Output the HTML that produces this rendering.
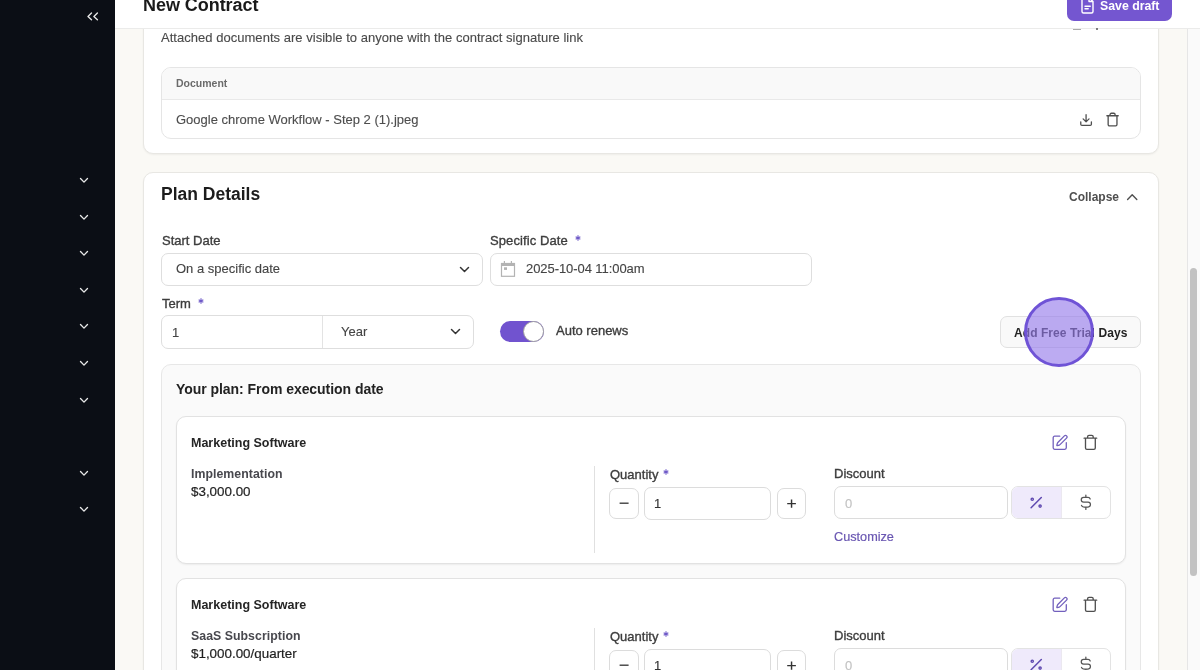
<!DOCTYPE html>
<html><head><meta charset="utf-8"><style>
html,body{margin:0;padding:0;width:1200px;height:670px;overflow:hidden;background:#faf9f5;}
body{position:relative;font-family:"Liberation Sans",sans-serif;}
.t{position:absolute;white-space:nowrap;line-height:1;-webkit-font-smoothing:antialiased;will-change:transform;}
.b{position:absolute;}
</style></head><body>
<div class="b" style="left:0px;top:0px;width:115px;height:670px;background:#0b0e15;"></div>
<svg class="b" style="left:85px;top:10px" width="16" height="14" viewBox="0 0 16 14"><path d="M6.5 2.95 L3.0 6.4 L6.5 9.85 M12.4 2.95 L8.9 6.4 L12.4 9.85" fill="none" stroke="#e6e6e6" stroke-width="1.4" stroke-linecap="round" stroke-linejoin="round"/></svg>
<svg class="b" style="left:77px;top:175.90px" width="13" height="9" viewBox="0 0 13 9"><path d="M3.5 2.5 L7.0 6.1 L10.5 2.5" fill="none" stroke="#e9e9e9" stroke-width="1.35" stroke-linecap="round" stroke-linejoin="round"/></svg>
<svg class="b" style="left:77px;top:212.50px" width="13" height="9" viewBox="0 0 13 9"><path d="M3.5 2.5 L7.0 6.1 L10.5 2.5" fill="none" stroke="#e9e9e9" stroke-width="1.35" stroke-linecap="round" stroke-linejoin="round"/></svg>
<svg class="b" style="left:77px;top:249.10px" width="13" height="9" viewBox="0 0 13 9"><path d="M3.5 2.5 L7.0 6.1 L10.5 2.5" fill="none" stroke="#e9e9e9" stroke-width="1.35" stroke-linecap="round" stroke-linejoin="round"/></svg>
<svg class="b" style="left:77px;top:285.70px" width="13" height="9" viewBox="0 0 13 9"><path d="M3.5 2.5 L7.0 6.1 L10.5 2.5" fill="none" stroke="#e9e9e9" stroke-width="1.35" stroke-linecap="round" stroke-linejoin="round"/></svg>
<svg class="b" style="left:77px;top:322.30px" width="13" height="9" viewBox="0 0 13 9"><path d="M3.5 2.5 L7.0 6.1 L10.5 2.5" fill="none" stroke="#e9e9e9" stroke-width="1.35" stroke-linecap="round" stroke-linejoin="round"/></svg>
<svg class="b" style="left:77px;top:358.90px" width="13" height="9" viewBox="0 0 13 9"><path d="M3.5 2.5 L7.0 6.1 L10.5 2.5" fill="none" stroke="#e9e9e9" stroke-width="1.35" stroke-linecap="round" stroke-linejoin="round"/></svg>
<svg class="b" style="left:77px;top:395.50px" width="13" height="9" viewBox="0 0 13 9"><path d="M3.5 2.5 L7.0 6.1 L10.5 2.5" fill="none" stroke="#e9e9e9" stroke-width="1.35" stroke-linecap="round" stroke-linejoin="round"/></svg>
<svg class="b" style="left:77px;top:468.70px" width="13" height="9" viewBox="0 0 13 9"><path d="M3.5 2.5 L7.0 6.1 L10.5 2.5" fill="none" stroke="#e9e9e9" stroke-width="1.35" stroke-linecap="round" stroke-linejoin="round"/></svg>
<svg class="b" style="left:77px;top:505.30px" width="13" height="9" viewBox="0 0 13 9"><path d="M3.5 2.5 L7.0 6.1 L10.5 2.5" fill="none" stroke="#e9e9e9" stroke-width="1.35" stroke-linecap="round" stroke-linejoin="round"/></svg>
<div class="b" style="left:115px;top:0px;width:1085px;height:670px;background:#faf9f5;"></div>
<div class="b" style="left:143px;top:-20px;width:1016px;height:174px;background:#fff;border:1px solid #e8e7e3;border-radius:10px;box-sizing:border-box;box-shadow:0 1px 2px rgba(0,0,0,0.05);"></div>
<div class="t" style="left:160.90px;top:30.50px;font-size:13px;font-weight:normal;color:#4a4a4a;letter-spacing:0.03px;-webkit-text-stroke:0.12px #4a4a4a;">Attached documents are visible to anyone with the contract signature link</div>
<div class="b" style="left:161px;top:67px;width:980px;height:72px;background:#fff;border:1px solid #e5e5e5;border-radius:10px;box-sizing:border-box;overflow:hidden;"></div>
<div class="b" style="left:162px;top:68px;width:978px;height:32px;background:#f9f9f9;border-radius:9px 9px 0 0;"></div>
<div class="b" style="left:162px;top:99px;width:978px;height:1px;background:#e9e9e9;"></div>
<div class="t" style="left:175.90px;top:78.31px;font-size:10.5px;font-weight:bold;color:#6b6b6b;">Document</div>
<div class="t" style="left:175.90px;top:112.50px;font-size:13px;font-weight:normal;color:#4d4d4d;-webkit-text-stroke:0.12px #4d4d4d;">Google chrome Workflow - Step 2 (1).jpeg</div>
<svg class="b" style="left:1078.80px;top:112.80px;" width="14.16" height="14.16" viewBox="0 0 24 24"><path d="M21 15v4a2 2 0 0 1-2 2H5a2 2 0 0 1-2-2v-4 M7 10l5 5 5-5 M12 15V3" fill="none" stroke="#4f4f4f" stroke-width="2.2" stroke-linecap="round" stroke-linejoin="round"/></svg>
<svg class="b" style="left:1105.44px;top:111.57px;" width="15.12" height="15.12" viewBox="0 0 24 24"><path d="M3 6h18 M19 6v14c0 1-1 2-2 2H7c-1 0-2-1-2-2V6 M8 6V4c0-1 1-2 2-2h4c1 0 2 1 2 2v2" fill="none" stroke="#4f4f4f" stroke-width="2.1" stroke-linecap="round" stroke-linejoin="round"/></svg>
<div class="b" style="left:115px;top:0px;width:1085px;height:28px;background:#fff;"></div>
<div class="b" style="left:115px;top:28px;width:1085px;height:1px;background:#ebebea;"></div>
<div class="t" style="left:142.60px;top:-3.74px;font-size:18px;font-weight:bold;color:#1a1a1a;letter-spacing:-0.05px;">New Contract</div>
<div class="b" style="left:1067px;top:-10px;width:105px;height:31px;background:#7456d0;border-radius:7px;"></div>
<svg class="b" style="left:1079px;top:-4.5px" width="17" height="19" viewBox="0 0 17 19"><path d="M3 3 Q3 1.5 4.5 1.5 H10 L14 5.5 V15.5 Q14 17 12.5 17 H4.5 Q3 17 3 15.5 Z M10 1.5 V5.5 H14 M6 10.2 H11.2 M6 12.7 H9.2" fill="none" stroke="#fff" stroke-width="1.4" stroke-linecap="round" stroke-linejoin="round"/></svg>
<div class="t" style="left:1100.00px;top:-0.31px;font-size:12.3px;font-weight:bold;color:#ffffff;">Save draft</div>
<div class="b" style="left:143px;top:171.6px;width:1016px;height:528.4px;background:#fff;border:1px solid #e8e7e3;border-radius:10px;box-sizing:border-box;box-shadow:0 1px 2px rgba(0,0,0,0.05);"></div>
<div class="t" style="left:161.00px;top:186.39px;font-size:17.5px;font-weight:bold;color:#1c1c1c;">Plan Details</div>
<div class="t" style="left:1068.50px;top:191.24px;font-size:12px;font-weight:bold;color:#4f4f4f;">Collapse</div>
<svg class="b" style="left:1125px;top:191px" width="14" height="11" viewBox="0 0 14 11"><path d="M2.6 8.4 L7.2 3.7 L11.8 8.4" fill="none" stroke="#4f4f4f" stroke-width="1.4" stroke-linecap="round" stroke-linejoin="round"/></svg>
<div class="t" style="left:161.50px;top:233.75px;font-size:13px;font-weight:normal;color:#3d3d3d;-webkit-text-stroke:0.35px #3d3d3d;">Start Date</div>
<div class="t" style="left:490.00px;top:233.75px;font-size:13px;font-weight:normal;color:#3d3d3d;letter-spacing:0.1px;-webkit-text-stroke:0.35px #3d3d3d;">Specific Date</div>
<svg class="b" style="left:573.35px;top:233.20px" width="10" height="10" viewBox="573.35 233.20 10 10"><path d="M578.35 235.50 L578.35 240.90 M576.01 236.85 L580.69 239.55 M580.69 236.85 L576.01 239.55 " stroke="#6f5ac8" stroke-width="1.1" stroke-linecap="butt"/></svg>
<div class="b" style="left:161px;top:253px;width:322px;height:33px;border:1px solid #dedede;border-radius:7px;box-sizing:border-box;background:#fff;"></div>
<div class="t" style="left:176.00px;top:262.40px;font-size:13px;font-weight:normal;color:#444;-webkit-text-stroke:0.12px #444;">On a specific date</div>
<svg class="b" style="left:459px;top:265.5px" width="11" height="7" viewBox="0 0 11 7"><path d="M1.5 1.5 L5.5 5.5 L9.5 1.5" fill="none" stroke="#333" stroke-width="1.5" stroke-linecap="round" stroke-linejoin="round"/></svg>
<div class="b" style="left:490px;top:253px;width:322px;height:33px;border:1px solid #dedede;border-radius:7px;box-sizing:border-box;background:#fff;"></div>
<svg class="b" style="left:500px;top:260px" width="16" height="17" viewBox="0 0 16 17"><rect x="1.5" y="3.5" width="13" height="12.8" fill="none" stroke="#b3b3b3" stroke-width="1.2"/><rect x="1.2" y="3" width="13.6" height="3" fill="#b3b3b3"/><path d="M4.4 1 V3.5 M11.4 1 V3.5" stroke="#b3b3b3" stroke-width="1.2"/><rect x="4" y="7.3" width="3" height="2.6" fill="#b3b3b3"/></svg>
<div class="t" style="left:526.00px;top:262.40px;font-size:13px;font-weight:normal;color:#444;letter-spacing:-0.07px;-webkit-text-stroke:0.12px #444;">2025-10-04 11:00am</div>
<div class="t" style="left:162.00px;top:296.50px;font-size:13px;font-weight:normal;color:#3d3d3d;-webkit-text-stroke:0.35px #3d3d3d;">Term</div>
<svg class="b" style="left:196.30px;top:295.80px" width="10" height="10" viewBox="196.30 295.80 10 10"><path d="M201.30 298.10 L201.30 303.50 M198.96 299.45 L203.64 302.15 M203.64 299.45 L198.96 302.15 " stroke="#6f5ac8" stroke-width="1.1" stroke-linecap="butt"/></svg>
<div class="b" style="left:161px;top:315px;width:313px;height:34px;border:1px solid #dedede;border-radius:7px;box-sizing:border-box;background:#fff;"></div>
<div class="b" style="left:322px;top:316px;width:1px;height:32px;background:#e3e3e3;"></div>
<div class="t" style="left:172.00px;top:325.70px;font-size:13px;font-weight:normal;color:#444;-webkit-text-stroke:0.12px #444;">1</div>
<div class="t" style="left:340.80px;top:324.90px;font-size:13px;font-weight:normal;color:#444;-webkit-text-stroke:0.12px #444;">Year</div>
<svg class="b" style="left:450px;top:328px" width="11" height="7" viewBox="0 0 11 7"><path d="M1.5 1.5 L5.5 5.5 L9.5 1.5" fill="none" stroke="#333" stroke-width="1.5" stroke-linecap="round" stroke-linejoin="round"/></svg>
<div class="b" style="left:500px;top:321.3px;width:44px;height:21.0px;background:#7153cf;border-radius:11px;"></div>
<div class="b" style="left:523.3px;top:321.3px;width:21.0px;height:21.0px;background:#fff;border:0.7px solid #a0a0a0;border-radius:50%;box-sizing:border-box;"></div>
<div class="t" style="left:556.00px;top:323.70px;font-size:13px;font-weight:normal;color:#3d3d3d;-webkit-text-stroke:0.35px #3d3d3d;">Auto renews</div>
<div class="b" style="left:1000px;top:316px;width:141px;height:32px;background:#f9f9f9;border:1px solid #e1e1e1;border-radius:7px;box-sizing:border-box;"></div>
<div class="t" style="left:1013.50px;top:326.54px;font-size:12px;font-weight:bold;color:#232323;letter-spacing:0.07px;">Add Free Trial Days</div>
<div class="b" style="left:161px;top:364px;width:980px;height:336px;background:#fafafa;border:1px solid #e7e7e7;border-radius:10px;box-sizing:border-box;"></div>
<div class="t" style="left:175.60px;top:382.35px;font-size:14px;font-weight:bold;color:#222;letter-spacing:-0.05px;">Your plan: From execution date</div>
<div class="b" style="left:176px;top:416px;width:950px;height:148px;background:#fff;border:1px solid #e2e2e2;border-radius:10px;box-sizing:border-box;box-shadow:0 1px 2px rgba(0,0,0,0.06);"></div>
<div class="t" style="left:190.60px;top:436.72px;font-size:12.5px;font-weight:bold;color:#252525;">Marketing Software</div>
<svg class="b" style="left:1051.20px;top:433.80px;" width="17.47" height="17.47" viewBox="0 0 24 24"><path d="M12 3H5a2 2 0 0 0-2 2v14a2 2 0 0 0 2 2h14a2 2 0 0 0 2-2v-7 M18.375 2.625a1 1 0 0 1 3 3l-9.013 9.014a2 2 0 0 1-.853.505l-2.873.84a.5.5 0 0 1-.62-.62l.84-2.873a2 2 0 0 1 .506-.852z" fill="none" stroke="#7260bd" stroke-width="1.8" stroke-linecap="round" stroke-linejoin="round"/></svg>
<svg class="b" style="left:1081.85px;top:433.80px;" width="16.80" height="16.80" viewBox="0 0 24 24"><path d="M3 6h18 M19 6v14c0 1-1 2-2 2H7c-1 0-2-1-2-2V6 M8 6V4c0-1 1-2 2-2h4c1 0 2 1 2 2v2" fill="none" stroke="#4f4f4f" stroke-width="1.9" stroke-linecap="round" stroke-linejoin="round"/></svg>
<div class="t" style="left:191.00px;top:467.89px;font-size:12.3px;font-weight:bold;color:#48484e;letter-spacing:0.05px;">Implementation</div>
<div class="t" style="left:190.90px;top:484.76px;font-size:13.4px;font-weight:normal;color:#1f1f1f;-webkit-text-stroke:0.2px #1f1f1f;">$3,000.00</div>
<div class="b" style="left:594px;top:465.5px;width:1px;height:87.0px;background:#e0e0e0;"></div>
<div class="t" style="left:609.50px;top:467.60px;font-size:13px;font-weight:normal;color:#3d3d3d;-webkit-text-stroke:0.35px #3d3d3d;">Quantity</div>
<svg class="b" style="left:661.30px;top:466.90px" width="10" height="10" viewBox="661.30 466.90 10 10"><path d="M666.30 469.20 L666.30 474.60 M663.96 470.55 L668.64 473.25 M668.64 470.55 L663.96 473.25 " stroke="#6f5ac8" stroke-width="1.1" stroke-linecap="butt"/></svg>
<div class="b" style="left:609px;top:488px;width:30px;height:31px;border:1px solid #dcdcdc;border-radius:7px;box-sizing:border-box;background:#fff;"></div>
<svg class="b" style="left:615px;top:495px" width="18" height="18" viewBox="615 495 18 18"><path d="M619.6 503.2 H628.6" stroke="#3a3a3a" stroke-width="1.35"/></svg>
<div class="b" style="left:644px;top:487px;width:127px;height:33px;border:1px solid #dcdcdc;border-radius:7px;box-sizing:border-box;background:#fff;"></div>
<div class="t" style="left:654.30px;top:497.30px;font-size:13px;font-weight:normal;color:#333;-webkit-text-stroke:0.12px #333;">1</div>
<div class="b" style="left:776.5px;top:488px;width:29.5px;height:31px;border:1px solid #dcdcdc;border-radius:7px;box-sizing:border-box;background:#fff;"></div>
<svg class="b" style="left:782px;top:494px" width="18" height="18" viewBox="782 494 18 18"><path d="M787.2 503.6 H795.9 M791.55 499.4 V507.8" stroke="#333" stroke-width="1.45"/></svg>
<div class="t" style="left:834.30px;top:466.90px;font-size:13px;font-weight:normal;color:#3d3d3d;-webkit-text-stroke:0.35px #3d3d3d;">Discount</div>
<div class="b" style="left:834px;top:486px;width:174px;height:33px;border:1px solid #dcdcdc;border-radius:7px;box-sizing:border-box;background:#fff;"></div>
<div class="t" style="left:844.90px;top:497.00px;font-size:13px;font-weight:normal;color:#c2c2c2;-webkit-text-stroke:0.12px #c2c2c2;">0</div>
<div class="b" style="left:1011px;top:486px;width:100px;height:33px;border:1px solid #e3e3e3;border-radius:7px;box-sizing:border-box;background:#fff;overflow:hidden;"></div>
<div class="b" style="left:1012px;top:487px;width:49px;height:31px;background:#efeafb;border-radius:6px 0 0 6px;"></div>
<div class="b" style="left:1060.5px;top:487px;width:1.0px;height:31px;background:#ebe8f0;"></div>
<svg class="b" style="left:1029px;top:496px" width="14" height="13" viewBox="0 0 14 13"><path d="M2.1 11.7 L12.3 1.5" stroke="#5e48b0" stroke-width="1.5" stroke-linecap="round"/><circle cx="3.25" cy="3.2" r="1.15" fill="none" stroke="#5e48b0" stroke-width="1.35"/><circle cx="11.1" cy="10.1" r="1.15" fill="none" stroke="#5e48b0" stroke-width="1.35"/></svg>
<svg class="b" style="left:1078px;top:493.4px" width="16" height="18" viewBox="0 0 16 18"><path d="M12.2 6.0 A2.4 2.4 0 0 0 10.05 4.4 H5.65 A2.4 2.4 0 0 0 5.65 9.2 H10.05 A2.4 2.4 0 0 1 10.05 14 H5.65 A2.4 2.4 0 0 1 3.5 12.4 M7.85 2.0 V4.4 M7.85 14 V16.4" fill="none" stroke="#555" stroke-width="1.25" stroke-linecap="round" stroke-linejoin="round"/></svg>
<div class="t" style="left:834.30px;top:530.75px;font-size:12.7px;font-weight:normal;color:#6a57b2;-webkit-text-stroke:0.2px #6a57b2;">Customize</div>
<div class="b" style="left:176px;top:578px;width:950px;height:148px;background:#fff;border:1px solid #e2e2e2;border-radius:10px;box-sizing:border-box;box-shadow:0 1px 2px rgba(0,0,0,0.06);"></div>
<div class="t" style="left:190.60px;top:598.72px;font-size:12.5px;font-weight:bold;color:#252525;">Marketing Software</div>
<svg class="b" style="left:1051.20px;top:595.80px;" width="17.47" height="17.47" viewBox="0 0 24 24"><path d="M12 3H5a2 2 0 0 0-2 2v14a2 2 0 0 0 2 2h14a2 2 0 0 0 2-2v-7 M18.375 2.625a1 1 0 0 1 3 3l-9.013 9.014a2 2 0 0 1-.853.505l-2.873.84a.5.5 0 0 1-.62-.62l.84-2.873a2 2 0 0 1 .506-.852z" fill="none" stroke="#7260bd" stroke-width="1.8" stroke-linecap="round" stroke-linejoin="round"/></svg>
<svg class="b" style="left:1081.85px;top:595.80px;" width="16.80" height="16.80" viewBox="0 0 24 24"><path d="M3 6h18 M19 6v14c0 1-1 2-2 2H7c-1 0-2-1-2-2V6 M8 6V4c0-1 1-2 2-2h4c1 0 2 1 2 2v2" fill="none" stroke="#4f4f4f" stroke-width="1.9" stroke-linecap="round" stroke-linejoin="round"/></svg>
<div class="t" style="left:191.00px;top:629.89px;font-size:12.3px;font-weight:bold;color:#48484e;letter-spacing:0.05px;">SaaS Subscription</div>
<div class="t" style="left:190.90px;top:646.76px;font-size:13.4px;font-weight:normal;color:#1f1f1f;-webkit-text-stroke:0.2px #1f1f1f;">$1,000.00/quarter</div>
<div class="b" style="left:594px;top:627.5px;width:1px;height:87.0px;background:#e0e0e0;"></div>
<div class="t" style="left:609.50px;top:629.60px;font-size:13px;font-weight:normal;color:#3d3d3d;-webkit-text-stroke:0.35px #3d3d3d;">Quantity</div>
<svg class="b" style="left:661.30px;top:628.90px" width="10" height="10" viewBox="661.30 628.90 10 10"><path d="M666.30 631.20 L666.30 636.60 M663.96 632.55 L668.64 635.25 M668.64 632.55 L663.96 635.25 " stroke="#6f5ac8" stroke-width="1.1" stroke-linecap="butt"/></svg>
<div class="b" style="left:609px;top:650px;width:30px;height:31px;border:1px solid #dcdcdc;border-radius:7px;box-sizing:border-box;background:#fff;"></div>
<svg class="b" style="left:615px;top:657px" width="18" height="18" viewBox="615 495 18 18"><path d="M619.6 503.2 H628.6" stroke="#3a3a3a" stroke-width="1.35"/></svg>
<div class="b" style="left:644px;top:649px;width:127px;height:33px;border:1px solid #dcdcdc;border-radius:7px;box-sizing:border-box;background:#fff;"></div>
<div class="t" style="left:654.30px;top:659.30px;font-size:13px;font-weight:normal;color:#333;-webkit-text-stroke:0.12px #333;">1</div>
<div class="b" style="left:776.5px;top:650px;width:29.5px;height:31px;border:1px solid #dcdcdc;border-radius:7px;box-sizing:border-box;background:#fff;"></div>
<svg class="b" style="left:782px;top:656px" width="18" height="18" viewBox="782 494 18 18"><path d="M787.2 503.6 H795.9 M791.55 499.4 V507.8" stroke="#333" stroke-width="1.45"/></svg>
<div class="t" style="left:834.30px;top:628.90px;font-size:13px;font-weight:normal;color:#3d3d3d;-webkit-text-stroke:0.35px #3d3d3d;">Discount</div>
<div class="b" style="left:834px;top:648px;width:174px;height:33px;border:1px solid #dcdcdc;border-radius:7px;box-sizing:border-box;background:#fff;"></div>
<div class="t" style="left:844.90px;top:659.00px;font-size:13px;font-weight:normal;color:#c2c2c2;-webkit-text-stroke:0.12px #c2c2c2;">0</div>
<div class="b" style="left:1011px;top:648px;width:100px;height:33px;border:1px solid #e3e3e3;border-radius:7px;box-sizing:border-box;background:#fff;overflow:hidden;"></div>
<div class="b" style="left:1012px;top:649px;width:49px;height:31px;background:#efeafb;border-radius:6px 0 0 6px;"></div>
<div class="b" style="left:1060.5px;top:649px;width:1.0px;height:31px;background:#ebe8f0;"></div>
<svg class="b" style="left:1029px;top:658px" width="14" height="13" viewBox="0 0 14 13"><path d="M2.1 11.7 L12.3 1.5" stroke="#5e48b0" stroke-width="1.5" stroke-linecap="round"/><circle cx="3.25" cy="3.2" r="1.15" fill="none" stroke="#5e48b0" stroke-width="1.35"/><circle cx="11.1" cy="10.1" r="1.15" fill="none" stroke="#5e48b0" stroke-width="1.35"/></svg>
<svg class="b" style="left:1078px;top:655.4px" width="16" height="18" viewBox="0 0 16 18"><path d="M12.2 6.0 A2.4 2.4 0 0 0 10.05 4.4 H5.65 A2.4 2.4 0 0 0 5.65 9.2 H10.05 A2.4 2.4 0 0 1 10.05 14 H5.65 A2.4 2.4 0 0 1 3.5 12.4 M7.85 2.0 V4.4 M7.85 14 V16.4" fill="none" stroke="#555" stroke-width="1.25" stroke-linecap="round" stroke-linejoin="round"/></svg>
<div class="t" style="left:834.30px;top:692.75px;font-size:12.7px;font-weight:normal;color:#6a57b2;-webkit-text-stroke:0.2px #6a57b2;">Customize</div>
<div class="b" style="left:1073px;top:28.6px;width:8px;height:1.1999999999999993px;background:#aaa;"></div>
<div class="b" style="left:1096.2px;top:28.4px;width:2.0px;height:2.0px;background:#555;border-radius:50%;"></div>
<div class="b" style="left:1187px;top:29px;width:13px;height:641px;background:#fafafa;border-left:1px solid #e6e6e6;box-sizing:border-box;"></div>
<div class="b" style="left:1190px;top:268px;width:7.2000000000000455px;height:308px;background:#c2c2c2;border-radius:4px;"></div>
<div class="b" style="left:1024px;top:297px;width:70px;height:70px;background:rgba(150,123,235,0.64);border:3px solid #6f53d6;border-radius:50%;box-sizing:border-box;"></div>

</body></html>
